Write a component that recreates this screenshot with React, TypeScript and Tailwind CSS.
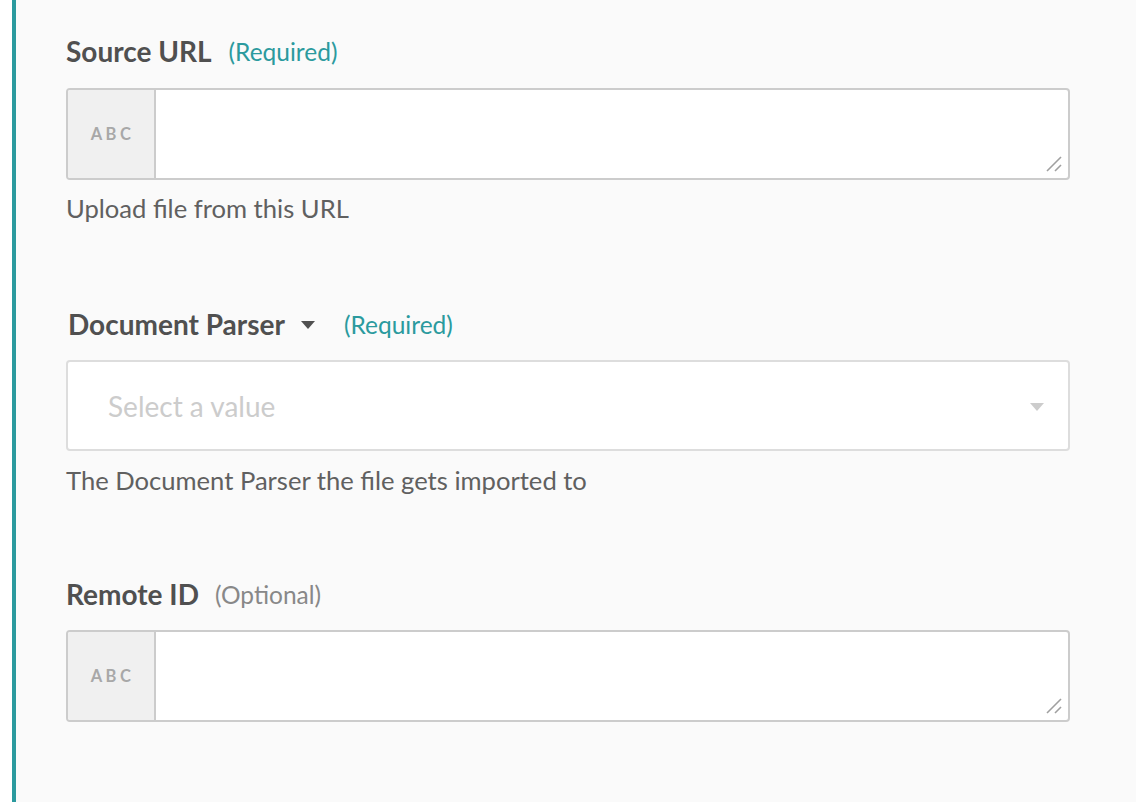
import React from "react";

function ResizeGrip() {
  return (
    <svg
      className="absolute right-[5px] bottom-[5px]"
      width="18"
      height="18"
      viewBox="0 0 18 18"
    >
      <line x1="2" y1="16" x2="16" y2="2" stroke="#a0a0a0" strokeWidth="1.6" />
      <line x1="10" y1="16" x2="16" y2="10" stroke="#a0a0a0" strokeWidth="1.6" />
    </svg>
  );
}

function TextField() {
  return (
    <div className="relative flex h-[92px] rounded-[4px] border-2 border-[#cccccc] bg-white overflow-hidden">
      <div className="flex w-[88px] shrink-0 items-center justify-center border-r-2 border-[#cccccc] bg-[#f0f0f0]">
        <span className="text-[16.5px] font-bold tracking-[3.5px] text-[#a8a8a8] pl-[3px]">ABC</span>
      </div>
      <div className="flex-1" />
      <ResizeGrip />
    </div>
  );
}

function Caret({ color, className }: { color: string; className?: string }) {
  return (
    <svg className={className} width="14" height="8" viewBox="0 0 14 8">
      <polygon points="0,0 14,0 7,8" fill={color} />
    </svg>
  );
}

export default function App() {
  return (
    <div className="flex min-h-screen font-['Lato','Open_Sans',sans-serif]">
      <div className="w-3 bg-white" />
      <div className="w-1 bg-[#2b9a9e]" />
      <main className="flex-1 bg-[#fafafa] pl-[50px] pr-[66px] pt-[36px]">
        {/* Source URL */}
        <div className="flex h-[30px] items-center gap-[17px]">
          <span className="text-[28px] font-bold text-[#505050]">Source URL</span>
          <span className="text-[24.5px] text-[#2b9a9e] pt-[3px]">(Required)</span>
        </div>
        <div className="mt-[22px]">
          <TextField />
        </div>
        <p className="mt-[14px] h-[28px] leading-[28px] text-[25.6px] text-[#606060]">
          Upload file from this URL
        </p>

        {/* Document Parser */}
        <div className="mt-[87px] flex h-[30px] items-center pl-[2px]">
          <span className="text-[28px] font-bold text-[#505050]">Document Parser</span>
          <Caret color="#505050" className="ml-[16px] mt-[2px]" />
          <span className="ml-[29px] text-[24.5px] text-[#2b9a9e] pt-[3px]">(Required)</span>
        </div>
        <div className="mt-[21px] flex h-[91px] items-center justify-between rounded-[4px] border-2 border-[#dddddd] bg-white pl-[40px] pr-[24px]">
          <span className="text-[28px] text-[#cccccc]">Select a value</span>
          <Caret color="#cccccc" className="mt-[2px]" />
        </div>
        <p className="mt-[15px] h-[28px] leading-[28px] text-[25.6px] text-[#606060]">
          The Document Parser the file gets imported to
        </p>

        {/* Remote ID */}
        <div className="mt-[85px] flex h-[30px] items-center gap-[16px]">
          <span className="text-[28px] font-bold text-[#505050]">Remote ID</span>
          <span className="text-[24.5px] text-[#888888] pt-[3px]">(Optional)</span>
        </div>
        <div className="mt-[21px]">
          <TextField />
        </div>
      </main>
    </div>
  );
}
